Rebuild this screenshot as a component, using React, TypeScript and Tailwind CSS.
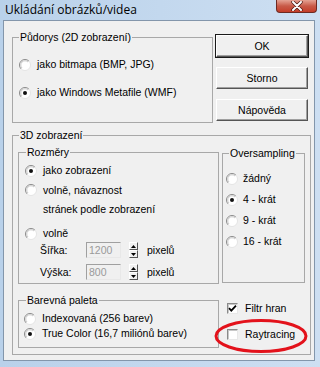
import React from 'react';

const Radio: React.FC<{ checked?: boolean }> = ({ checked }) => (
  <svg width="12" height="12" viewBox="0 0 12 12" className="shrink-0">
    <circle cx="6" cy="6" r="5.5" fill="#ffffff" />
    <path d="M2.1 9.9 A5.5 5.5 0 0 1 9.9 2.1" fill="none" stroke="#8a8a8a" strokeWidth="1" />
    <path d="M9.9 2.1 A5.5 5.5 0 0 1 2.1 9.9" fill="none" stroke="#e4e4e4" strokeWidth="1" />
    <path d="M3 9 A4.2 4.2 0 0 1 9 3" fill="none" stroke="#c8c8c8" strokeWidth="1" />
    {checked && <circle cx="6" cy="6" r="2" fill="#111111" />}
  </svg>
);

const Checkbox: React.FC<{ checked?: boolean }> = ({ checked }) => (
  <div className="w-[11px] h-[11px] shrink-0 bg-white border border-t-[#8a8a8a] border-l-[#8a8a8a] border-r-[#e8e8e8] border-b-[#e8e8e8] shadow-[inset_1px_1px_#c8c8c8] flex items-center justify-center">
    {checked && (
      <svg width="9" height="9" viewBox="0 0 9 9">
        <path d="M1 4.2 L3.3 6.6 L8 1.6" fill="none" stroke="#000000" strokeWidth="1.8" />
      </svg>
    )}
  </div>
);

const Group: React.FC<{ label: string; className: string; legendClass?: string; children?: React.ReactNode }> = ({
  label,
  className,
  legendClass = 'ml-[6px]',
  children,
}) => (
  <fieldset className={`border border-[#a8a8a8] ${className}`}>
    <legend className={`px-[1px] leading-[13px] ${legendClass}`}>{label}</legend>
    {children}
  </fieldset>
);

const Button: React.FC<{ label: string; isDefault?: boolean; className?: string }> = ({ label, isDefault, className }) => (
  <div className={`w-[94px] h-[24px] border ${isDefault ? 'border-[#1a1a1a]' : 'border-transparent'} ${className ?? ''}`}>
    <div className="w-full h-full bg-[#f0f0f0] border border-t-white border-l-white border-r-[#555555] border-b-[#555555] shadow-[inset_-1px_-1px_#a0a0a0] flex items-center justify-center leading-none">
      {label}
    </div>
  </div>
);

const Spinner: React.FC = () => (
  <div className="w-[9px] h-[16px] flex flex-col shrink-0">
    <div className="h-[8px] bg-[#f0f0f0] border border-t-white border-l-white border-r-[#555555] border-b-[#555555] flex items-center justify-center">
      <svg width="5" height="3" viewBox="0 0 5 3"><path d="M0 3 L2.5 0 L5 3 Z" fill="#000" /></svg>
    </div>
    <div className="h-[8px] bg-[#f0f0f0] border border-t-white border-l-white border-r-[#555555] border-b-[#555555] flex items-center justify-center">
      <svg width="5" height="3" viewBox="0 0 5 3"><path d="M0 0 L2.5 3 L5 0 Z" fill="#000" /></svg>
    </div>
  </div>
);

const SizeRow: React.FC<{ label: string; value: string; className?: string }> = ({ label, value, className }) => (
  <div className={`flex items-center pl-[21px] ${className ?? ''}`}>
    <span className="w-[46px] leading-[13px]">{label}</span>
    <div className="w-[35px] h-[16px] bg-[#f0f0f0] border border-t-[#a0a0a0] border-l-[#a0a0a0] border-r-[#e8e8e8] border-b-[#e8e8e8] text-[#9a9a9a] pl-[2px] leading-[14px]">
      {value}
    </div>
    <div className="ml-[8px]"><Spinner /></div>
    <span className="ml-[9px] leading-[13px]">pixelů</span>
  </div>
);

const RadioRow: React.FC<{ label: string; checked?: boolean; className?: string; gap?: string }> = ({
  label,
  checked,
  className,
  gap = 'gap-[6px]',
}) => (
  <div className={`flex items-center h-[13px] leading-[13px] ${gap} ${className ?? ''}`}>
    <Radio checked={checked} />
    <span>{label}</span>
  </div>
);

const App: React.FC = () => {
  return (
    <div className="relative w-[320px] h-[367px] overflow-hidden bg-gradient-to-r from-[#b9d1ea] to-[#cddff2] font-['Liberation_Sans',Arial,sans-serif] text-[10.5px] text-black">
      {/* title bar */}
      <div className="h-[20px] flex items-start justify-between">
        <span className="ml-[5px] mt-[3px] text-[12px] leading-[14px] font-['Open_Sans','Liberation_Sans',sans-serif]">
          Ukládání obrázků/videa
        </span>
        <div className="mr-[3px] w-[41px] h-[13px] rounded-b-[4px] border border-t-0 border-[#6d2a22] bg-gradient-to-b from-[#e4a294] via-[#c85a48] to-[#c43c28] flex items-center justify-center">
          <svg width="12" height="10" viewBox="0 0 12 10">
            <path d="M2 1 L10 9 M10 1 L2 9" stroke="#4a1a14" strokeWidth="3.4" strokeLinecap="round" />
            <path d="M2 1 L10 9 M10 1 L2 9" stroke="#ffffff" strokeWidth="2" strokeLinecap="round" />
          </svg>
        </div>
      </div>

      {/* client area */}
      <div className="ml-[3px] w-[312px] h-[341px] border border-[#8396ab] bg-[#f0f0f0]">
        <div className="flex items-start">
          <Group label="Půdorys (2D zobrazení)" className="ml-[8px] mt-[10px] w-[201px] h-[92px]">
            <div className="flex flex-col pl-[6px] pt-[14px] gap-[15px]">
              <RadioRow label="jako bitmapa (BMP, JPG)" />
              <RadioRow label="jako Windows Metafile (WMF)" checked />
            </div>
          </Group>
          <div className="ml-[2px] mt-[13px] flex flex-col gap-[8px]">
            <Button label="OK" isDefault />
            <Button label="Storno" />
            <Button label="Nápověda" />
          </div>
        </div>

        <Group label="3D zobrazení" className="ml-[8px] mt-[6px] w-[299px] h-[226px]">
          <div className="flex items-start">
            <div className="flex flex-col ml-[5px]">
              <Group label="Rozměry" legendClass="ml-[7px]" className="mt-[4px] w-[201px] h-[138px]">
                <div className="flex flex-col">
                  <RadioRow label="jako zobrazení" checked className="pl-[6px] mt-[5px]" />
                  <div className="flex items-start gap-[6px] pl-[6px] mt-[4px] leading-[19px]">
                    <div className="mt-[3px]"><Radio /></div>
                    <div>
                      <div>volně, návaznost</div>
                      <div>stránek podle zobrazení</div>
                    </div>
                  </div>
                  <RadioRow label="volně" className="pl-[6px] mt-[8px]" />
                  <SizeRow label="Šířka:" value="1200" className="mt-[2px]" />
                  <SizeRow label="Výška:" value="800" className="mt-[6px]" />
                </div>
              </Group>
              <Group label="Barevná paleta" legendClass="ml-[7px]" className="mt-[10px] w-[201px] h-[54px]">
                <div className="flex flex-col pl-[5px] pt-[5px] gap-[2px]">
                  <RadioRow label="Indexovaná (256 barev)" />
                  <RadioRow label="True Color (16,7 miliónů barev)" checked />
                </div>
              </Group>
            </div>

            <div className="flex flex-col ml-[3px]">
              <Group label="Oversampling" className="mt-[5px] w-[83px] h-[136px]">
                <div className="flex flex-col pl-[3px] pt-[12px] gap-[8px]">
                  <RadioRow label="žádný" gap="gap-[5px]" />
                  <RadioRow label="4 - krát" checked gap="gap-[5px]" />
                  <RadioRow label="9 - krát" gap="gap-[5px]" />
                  <RadioRow label="16 - krát" gap="gap-[5px]" />
                </div>
              </Group>
              <div className="flex items-center gap-[7px] pl-[5px] mt-[19px] h-[13px] leading-[13px]">
                <Checkbox checked />
                <span>Filtr hran</span>
              </div>
              <div className="flex items-center gap-[7px] pl-[5px] mt-[13px] h-[13px] leading-[13px]">
                <Checkbox />
                <span>Raytracing</span>
              </div>
            </div>
          </div>
        </Group>
      </div>

      {/* red annotation */}
      <svg className="absolute left-[213px] top-[318px]" width="96" height="36" viewBox="0 0 96 36">
        <ellipse cx="48" cy="18" rx="45" ry="15.5" fill="none" stroke="#e3121b" strokeWidth="3" />
      </svg>
    </div>
  );
};

export default App;
